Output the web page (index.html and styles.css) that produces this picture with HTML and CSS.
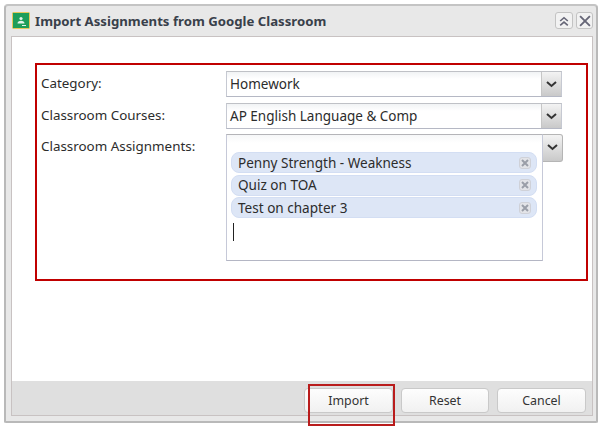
FILE: index.html
```html
<!DOCTYPE html>
<html lang="en">
<head>
<meta charset="utf-8">
<title>Import Assignments from Google Classroom</title>
<link rel="stylesheet" href="styles.css">
</head>
<body>
<div class="window">
  <div class="titlebar">
    <svg class="logo" width="18" height="17" viewBox="0 0 18 17"><rect x="0.5" y="0.5" width="17" height="16" rx="1" fill="#1e9e5a" stroke="#e8c75a"/><circle cx="9" cy="6.500" r="1.600" fill="#e4f3ea"/><path d="M5.500 11.500c0-2 1.500-2.800 3.500-2.800s3.500.8 3.500 2.800z" fill="#e4f3ea"/><rect x="10" y="13" width="4" height="1" fill="#e4f3ea"/></svg>
    <span class="title">Import Assignments from Google Classroom</span>
    <span class="tool"><svg width="12" height="12" viewBox="0 0 11 11"><path d="M2 5.500l3.500-3 3.500 3M2 9.500l3.500-3 3.500 3" fill="none" stroke="#667" stroke-width="1.500"/></svg></span>
    <span class="tool"><svg width="12" height="12" viewBox="0 0 11 11"><path d="M1 1l9 9M10 1l-9 9" fill="none" stroke="#667" stroke-width="1.700"/></svg></span>
  </div>
  <div class="content">
    <div class="body">
      <div class="form">
        <div class="row">
          <label class="label">Category:</label>
          <div class="combo"><span class="value">Homework</span><span class="trigger"><svg width="11" height="7" viewBox="0 0 11 7"><path d="M1 1l4.500 4 4.500-4" fill="none" stroke="#333" stroke-width="2"/></svg></span></div>
        </div>
        <div class="row">
          <label class="label">Classroom Courses:</label>
          <div class="combo"><span class="value">AP English Language &amp; Comp</span><span class="trigger"><svg width="11" height="7" viewBox="0 0 11 7"><path d="M1 1l4.500 4 4.500-4" fill="none" stroke="#333" stroke-width="2"/></svg></span></div>
        </div>
        <div class="row row-multi">
          <label class="label">Classroom Assignments:</label>
          <div class="multi">
            <div class="tagbox">
              <div class="tag"><span>Penny Strength - Weakness</span><span class="close"><svg width="8" height="8" viewBox="0 0 8 8"><path d="M1 1l6 6M7 1l-6 6" stroke="#9a9ea8" stroke-width="2"/></svg></span></div>
              <div class="tag"><span>Quiz on TOA</span><span class="close"><svg width="8" height="8" viewBox="0 0 8 8"><path d="M1 1l6 6M7 1l-6 6" stroke="#9a9ea8" stroke-width="2"/></svg></span></div>
              <div class="tag"><span>Test on chapter 3</span><span class="close"><svg width="8" height="8" viewBox="0 0 8 8"><path d="M1 1l6 6M7 1l-6 6" stroke="#9a9ea8" stroke-width="2"/></svg></span></div>
              <div class="caret"></div>
            </div>
            <span class="trigger tall"><svg width="11" height="7" viewBox="0 0 11 7"><path d="M1 1l4.500 4 4.500-4" fill="none" stroke="#333" stroke-width="2"/></svg></span>
          </div>
        </div>
      </div>
    </div>
    <div class="footer">
      <button class="btn">Import</button>
      <button class="btn">Reset</button>
      <button class="btn">Cancel</button>
    </div>
  </div>
  <div class="mark mark-form"></div>
  <div class="mark mark-import"></div>
</div>
</body>
</html>
```
FILE: styles.css
```css
* { box-sizing: border-box; }
html, body { margin: 0; padding: 0; background: #fff; }
body {
  width: 601px; height: 428px; overflow: hidden;
  padding: 4px 3px 5px 4px;
  font-family: "Noto Sans", sans-serif;
  font-size: 13.400px; color: #2c2c2c;
}
.window {
  position: relative;
  width: 594px; height: 419px;
  background: #e8e8e8;
  border: 2px solid #b9b9b9;
  border-top-color: #c4c4c4;
  border-radius: 4px 4px 2px 2px;
  padding: 0 3px 5px 5px;
  display: flex; flex-direction: column;
}
.titlebar {
  height: 30px; flex: none;
  display: flex; align-items: center; gap: 3px;
  padding: 0 0 1px 1px;
}
.logo { flex: none; margin-right: 2px; }
.title { flex: 1; font-weight: 700; font-size: 13.200px; color: #39404a; }
.tool {
  width: 18px; height: 17px;
  border: 1px solid #c3c3c3; border-radius: 3px;
  background: #f2f2f2;
  display: flex; align-items: center; justify-content: center;
}
.tool:last-child { width: 17px; }
.content {
  flex: 1;
  display: flex; flex-direction: column;
  background: #fff;
  border: 1px solid #c8c2c2;
}
.body { flex: 1; padding: 34px 30px 0 26px; }
.form { display: flex; flex-direction: column; gap: 6px; }
.row { display: flex; align-items: flex-start; }
.row-multi { margin-top: -1px; }
.label { width: 188px; flex: none; padding: 1px 0 0 3px; line-height: 22px; }
.combo {
  width: 337px; height: 26px;
  display: flex;
  font-size: 13.500px;
  background: linear-gradient(#f1f3f5, #fff 7px);
  border: 1px solid #c6c9d2;
  border-bottom-color: #b5b8c4;
  border-top-color: #bfc1c6;
}
.value { flex: 1; padding: 0 3px; line-height: 24px; }
.trigger {
  width: 20px; flex: none;
  display: flex; align-items: center; justify-content: center;
  background: linear-gradient(#f3f3f3, #c9c9c9);
  border-left: 1px solid #c6c6c6;
}
.multi { display: flex; align-items: flex-start; width: 337px; }
.tagbox {
  width: 317px; height: 127px;
  padding: 17px 5px 0 4px;
  background: linear-gradient(#f6f7f8, #fff 8px);
  border: 1px solid #c6c9d8;
  border-top-color: #b4b4b8;
  border-bottom-color: #b4b6c4;
  display: flex; flex-direction: column; gap: 1.500px;
}
.trigger.tall {
  height: 28px;
  align-items: flex-start; padding-top: 9px;
  border: 1px solid #b5b5b5; border-left: 0;
  border-radius: 0 3px 3px 0;
}
.tag {
  height: 21px; flex: none;
  display: flex; align-items: center; justify-content: space-between;
  padding: 1px 5px 0 6px;
  font-size: 13.550px;
  background: #dde6f6;
  border: 1px solid #d3def3;
  border-radius: 8px;
  line-height: 19px;
}
.close {
  width: 12px; height: 12px;
  margin-top: -1px;
  display: flex; align-items: center; justify-content: center;
  background: #e3e4e8;
  border: 1px solid #cfd1d8; border-radius: 3px;
}
.caret { width: 1px; height: 18px; margin: 3px 0 0 2px; background: #222; }
.footer {
  height: 34px; flex: none;
  display: flex; justify-content: flex-end; align-items: flex-start;
  gap: 8px;
  padding: 7px 6px 0 0;
  background: #dfdfdf;
}
.btn {
  width: 89px; height: 25px;
  font: 12.400px "Noto Sans", sans-serif;
  color: #333;
  background: linear-gradient(#fdfdfd, #f1f1f1);
  border: 1px solid #c9c9c9; border-radius: 4px;
  padding: 0;
}
.btn:nth-child(2) { width: 88px; }
.mark { position: absolute; pointer-events: none; }
.mark-form {
  left: 29px; top: 57px; width: 553px; height: 218px;
  border: 2px solid #c00000;
}
.mark-import {
  left: 302px; top: 378px; width: 87px; height: 42px;
  border: 2px solid #b91c1c;
}
```
